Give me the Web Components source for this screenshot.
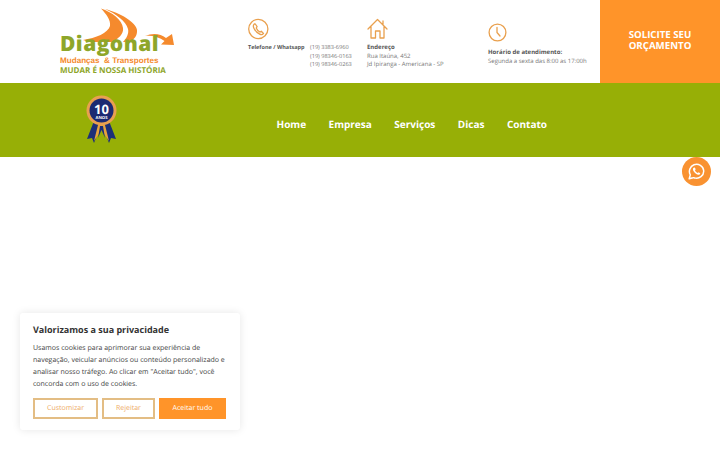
<!DOCTYPE html>
<html lang="pt-BR">
<head>
<meta charset="utf-8">
<title>Diagonal Mudanças</title>
<style>
  html, body { margin: 0; padding: 0; background: #fff; }
  body { font-family: "Open Sans", sans-serif; height: 450px; overflow: hidden; text-rendering: geometricPrecision; }
</style>
</head>
<body>
<site-header></site-header>
<site-nav></site-nav>
<whats-button></whats-button>
<cookie-box></cookie-box>

<script>
class SiteLogo extends HTMLElement {
    constructor() {
        super();
        this.attachShadow({mode: 'open'});
        this.shadowRoot.innerHTML = `
        <style>
            :host { display: block; position: relative; width: 120px; height: 72px; }
            svg { position: absolute; left: 0; top: 0; }
            .name { position: absolute; left: 0; top: 27px; font: 800 21px/22px "Open Sans", sans-serif; color: #8ea62a; letter-spacing: .45px; white-space: nowrap; }
            .sub { position: absolute; left: 0; top: 50px; font: 700 8.1px/10px "Liberation Sans", sans-serif; color: #f58a2d; white-space: nowrap; }
            .tag { position: absolute; left: 0; top: 60px; font: 700 8px/9px "Open Sans", sans-serif; color: #8ea62a; white-space: nowrap; }
        </style>
        <svg width="120" height="50" viewBox="0 0 120 50">
            <path d="M23 34 C36 32 48 27 50 20 C51 14 46 8 41 2.5 C52 6 62 14 63 22 C64 28 58 33 52 36 L30 36Z" fill="#f58a2d"/>
            <path d="M45 3 C60 7 76 16 77 24 C77.5 30 74 33 70 36 L63 36 C67 32 69 27 68 23 C66 15 56 8 45 3Z" fill="#f58a2d"/>
            <path d="M85 30 C92 27 100 27 106 32 L112 28 L114 39 L101 38.5 L104.5 35 C99 31 92 29 85 30Z" fill="#f58a2d"/>
        </svg>
        <span class="name">Diagonal</span>
        <span class="sub">Mudanças &nbsp;&amp; Transportes</span>
        <span class="tag">MUDAR É NOSSA HISTÓRIA</span>
        `;
    }
}

class InfoBlock extends HTMLElement {
    constructor() {
        super();
        this.attachShadow({mode: 'open'});
        this.shadowRoot.innerHTML = `
        <style>
            :host { display: flex; flex-direction: column; font-size: 6px; line-height: 8.7px; color: #777; white-space: nowrap; }
            .icon { height: 22px; margin-bottom: 3px; }
        </style>
        <div class="icon"><slot name="icon"></slot></div>
        <slot></slot>
        `;
    }
}

class SiteHeader extends HTMLElement {
    constructor() {
        super();
        this.attachShadow({mode: 'open'});
        this.shadowRoot.innerHTML = `
        <style>
            :host { display: flex; height: 83px; background: #fff; }
            site-logo { margin: 6px 0 0 60px; }
            .infos { flex: 1; display: flex; }
            .phone { margin: 18px 0 0 68px; width: 119px; }
            .address { margin-top: 18px; width: 121px; }
            .hours { margin-top: 23px; }
            .phone-row { display: flex; gap: 5.5px; }
            .phone-row div:last-child { display: flex; flex-direction: column; font-size: 5.6px; }
            b { color: #555; font-weight: 700; }
            .phone b { font-size: 5.5px; }
            .cta { width: 120px; background: #ff9429; color: #fff; font-weight: 700; font-size: 9.7px; line-height: 11.5px; text-align: center; display: flex; align-items: center; justify-content: center; padding-bottom: 3px; box-sizing: border-box; }
            svg { display: block; fill: none; stroke: #e9a04e; stroke-width: 1.3; stroke-linecap: round; stroke-linejoin: round; }
        </style>
        <site-logo></site-logo>
        <div class="infos">
            <info-block class="phone">
                <svg slot="icon" width="22" height="22" viewBox="0 0 22 22">
                    <circle cx="10.3" cy="11" r="9.6"/>
                    <path d="M6.3 6 C5.1 7 5.1 8.5 5.9 10.2 C7.1 12.8 9.3 15 11.7 16.2 C13.3 17 14.7 16.6 15.5 15.4 L13.3 13.2 L11.9 14 C10.3 13.2 8.9 11.6 8.2 10 L9.1 8.6 L7.3 6Z"/>
                </svg>
                <div class="phone-row">
                    <div><b>Telefone / Whatsapp</b></div>
                    <div><span>(19) 3383-6960</span><span>(19) 98346-0163</span><span>(19) 98346-0263</span></div>
                </div>
            </info-block>
            <info-block class="address">
                <svg slot="icon" width="22" height="22" viewBox="0 0 22 22">
                    <path d="M1 11 L10.5 1.5 L20 11 M16 7 V3 M4 9 V20 H8.5 V13 H13 V20 H17 V9"/>
                </svg>
                <b>Endereço</b>
                <span>Rua Itaúna, 452</span>
                <span>Jd Ipiranga - Americana - SP</span>
            </info-block>
            <info-block class="hours">
                <svg slot="icon" width="19" height="19" viewBox="0 0 19 19">
                    <circle cx="9.5" cy="9.5" r="8.4"/>
                    <path d="M9 4.5 V9.5 L12 13"/>
                </svg>
                <b>Horário de atendimento:</b>
                <span>Segunda a sexta das 8:00 as 17:00h</span>
            </info-block>
        </div>
        <div class="cta">SOLICITE SEU<br>ORÇAMENTO</div>
        `;
    }
}

class SiteNav extends HTMLElement {
    constructor() {
        super();
        this.attachShadow({mode: 'open'});
        this.shadowRoot.innerHTML = `
        <style>
            :host { display: flex; height: 74px; background: #97af06; align-items: center; }
            svg { display: block; margin: 0 0 0 85px; }
            nav { display: flex; gap: 22.5px; margin: 8px 0 0 158.5px; color: #fff; font-weight: 700; font-size: 10px; }
        </style>
        <svg width="33" height="50" viewBox="0 0 33 50">
            <path d="M9 26 L2 44 L7 43 L9 48 L16 30Z" fill="#1c2f78"/>
            <path d="M24 26 L31 44 L26 43 L24 48 L17 30Z" fill="#1c2f78"/>
            <path d="M13 30 L9 46 L16.5 35 L24 46 L20 30Z" fill="#e8a33c"/>
            <path d="M15 31 L13 43 L16.5 35 L20 43 L18 31Z" fill="#1c2f78"/>
            <circle cx="16.5" cy="15.5" r="15" fill="#e9a050"/>
            <circle cx="16.5" cy="15.5" r="12" fill="#1c2a72"/>
            <text x="16.5" y="18.5" text-anchor="middle" font-family="Open Sans" font-weight="700" font-size="13" fill="#fff">10</text>
            <text x="16.5" y="24" text-anchor="middle" font-family="Open Sans" font-weight="700" font-size="4.2" fill="#fff">ANOS</text>
        </svg>
        <nav><span>Home</span><span>Empresa</span><span>Serviços</span><span>Dicas</span><span>Contato</span></nav>
        `;
    }
}

class WhatsButton extends HTMLElement {
    constructor() {
        super();
        this.attachShadow({mode: 'open'});
        this.shadowRoot.innerHTML = `
        <style>
            :host { position: absolute; left: 682px; top: 157px; width: 29px; height: 29px; border-radius: 50%; background: #f99231; display: flex; align-items: center; justify-content: center; }
        </style>
        <svg width="17" height="17" viewBox="0 0 17 17" fill="none">
            <path d="M1.2 15.8 L2.3 11.9 C0.2 8.2 2 3.2 6 1.7 C10.4 0 15.4 3 15.7 7.8 C16 12.6 11.2 16.4 6.4 14.9 C5.9 14.8 5.4 14.5 5 14.7Z" stroke="#fff" stroke-width="1.5" stroke-linejoin="round"/>
            <path d="M5.6 4.8 C4.6 5.6 4.8 7 5.8 8.6 C7 10.4 8.8 11.8 10.4 11.8 C11.6 11.8 12.4 11 12.2 10.2 L10.6 9.2 L9.7 10 C8.6 9.6 7.4 8.4 7 7.2 L7.7 6.3 L6.8 4.6Z" fill="#fff"/>
        </svg>
        `;
    }
}

class CookieBox extends HTMLElement {
    constructor() {
        super();
        this.attachShadow({mode: 'open'});
        this.shadowRoot.innerHTML = `
        <style>
            :host { position: absolute; left: 20px; top: 313px; width: 220px; height: 117px; box-sizing: border-box; padding: 10px 13px 0; background: #fff; border-radius: 3px; box-shadow: 0 0 8px rgba(0,0,0,.1); color: #444; }
            h2 { margin: 0 0 7px; font-size: 9px; line-height: 13px; font-weight: 700; color: #333; }
            p { margin: 0; font-size: 7px; line-height: 12px; white-space: nowrap; }
            .btns { display: flex; gap: 4px; margin-top: 7px; }
            .btn { box-sizing: border-box; height: 21px; border: 2px solid #e3bd84; color: #eeac68; font-size: 7px; display: flex; align-items: center; justify-content: center; }
            .btn.solid { background: #ff9429; border-color: #ff9429; color: #fff; }
        </style>
        <h2>Valorizamos a sua privacidade</h2>
        <p>Usamos cookies para aprimorar sua experiência de<br>navegação, veicular anúncios ou conteúdo personalizado e<br>analisar nosso tráfego. Ao clicar em "Aceitar tudo", você<br>concorda com o uso de cookies.</p>
        <div class="btns">
            <div class="btn" style="width:65px">Customizar</div>
            <div class="btn" style="width:53px">Rejeitar</div>
            <div class="btn solid" style="width:67px">Aceitar tudo</div>
        </div>
        `;
    }
}

customElements.define('site-logo', SiteLogo);
customElements.define('info-block', InfoBlock);
customElements.define('site-header', SiteHeader);
customElements.define('site-nav', SiteNav);
customElements.define('whats-button', WhatsButton);
customElements.define('cookie-box', CookieBox);
</script>
</body>
</html>
